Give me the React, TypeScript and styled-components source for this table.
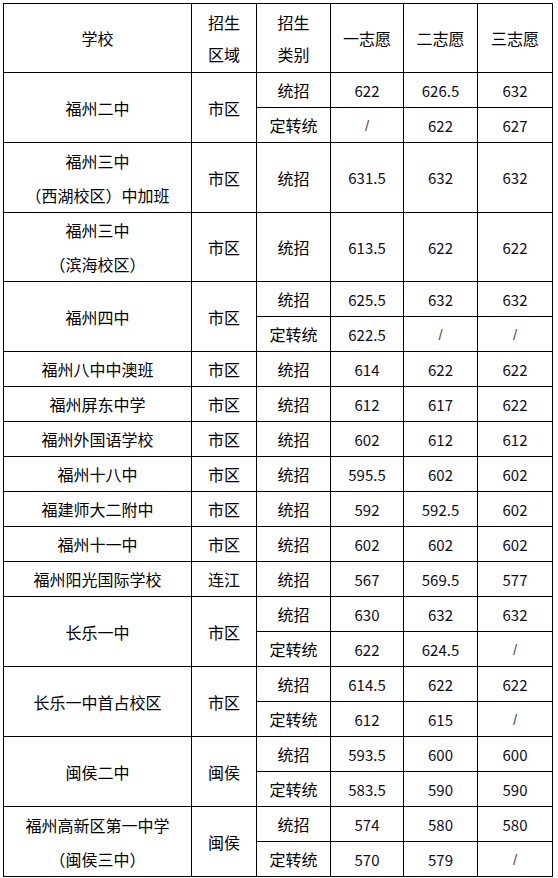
import styled, { createGlobalStyle } from 'styled-components';

type Sub = { kind: string; v: [string, string, string] };
type School = { name: string[]; area: string; subs: Sub[]; h?: number };

const UNIT = 35;

const schools: School[] = [
  {
    name: ['福州二中'],
    area: '市区',
    subs: [
      { kind: '统招', v: ['622', '626.5', '632'] },
      { kind: '定转统', v: ['/', '622', '627'] },
    ],
  },
  {
    name: ['福州三中', '（西湖校区）中加班'],
    area: '市区',
    h: 70,
    subs: [{ kind: '统招', v: ['631.5', '632', '632'] }],
  },
  {
    name: ['福州三中', '（滨海校区）'],
    area: '市区',
    h: 69,
    subs: [{ kind: '统招', v: ['613.5', '622', '622'] }],
  },
  {
    name: ['福州四中'],
    area: '市区',
    subs: [
      { kind: '统招', v: ['625.5', '632', '632'] },
      { kind: '定转统', v: ['622.5', '/', '/'] },
    ],
  },
  { name: ['福州八中中澳班'], area: '市区', subs: [{ kind: '统招', v: ['614', '622', '622'] }] },
  { name: ['福州屏东中学'], area: '市区', subs: [{ kind: '统招', v: ['612', '617', '622'] }] },
  { name: ['福州外国语学校'], area: '市区', subs: [{ kind: '统招', v: ['602', '612', '612'] }] },
  { name: ['福州十八中'], area: '市区', subs: [{ kind: '统招', v: ['595.5', '602', '602'] }] },
  { name: ['福建师大二附中'], area: '市区', subs: [{ kind: '统招', v: ['592', '592.5', '602'] }] },
  { name: ['福州十一中'], area: '市区', subs: [{ kind: '统招', v: ['602', '602', '602'] }] },
  { name: ['福州阳光国际学校'], area: '连江', subs: [{ kind: '统招', v: ['567', '569.5', '577'] }] },
  {
    name: ['长乐一中'],
    area: '市区',
    subs: [
      { kind: '统招', v: ['630', '632', '632'] },
      { kind: '定转统', v: ['622', '624.5', '/'] },
    ],
  },
  {
    name: ['长乐一中首占校区'],
    area: '市区',
    subs: [
      { kind: '统招', v: ['614.5', '622', '622'] },
      { kind: '定转统', v: ['612', '615', '/'] },
    ],
  },
  {
    name: ['闽侯二中'],
    area: '闽侯',
    subs: [
      { kind: '统招', v: ['593.5', '600', '600'] },
      { kind: '定转统', v: ['583.5', '590', '590'] },
    ],
  },
  {
    name: ['福州高新区第一中学', '（闽侯三中）'],
    area: '闽侯',
    subs: [
      { kind: '统招', v: ['574', '580', '580'] },
      { kind: '定转统', v: ['570', '579', '/'] },
    ],
  },
];

const GlobalStyle = createGlobalStyle`
  html, body {
    margin: 0;
    padding: 0;
    background: #fff;
  }
  body {
    font-family: 'Noto Sans CJK SC', 'Noto Sans', sans-serif;
    color: #000;
  }
`;

const Page = styled.div`
  padding: 3px;
`;

const Table = styled.table`
  border-collapse: collapse;
  table-layout: fixed;
  width: 549px;
`;

const Row = styled.tr<{ $h: number }>`
  height: ${(p) => p.$h}px;
`;

const Cell = styled.td<{ $lh?: number }>`
  border: 1px solid #000;
  padding: 0;
  text-align: center;
  vertical-align: middle;
  font-size: 16px;
  font-weight: 400;
  line-height: ${(p) => p.$lh ?? 20}px;
  white-space: nowrap;
  overflow: hidden;
`;

const Num = styled.span`
  font-family: 'Noto Sans CJK SC', sans-serif;
  font-size: 15px;
  color: #0d0d1a;
  font-variant-numeric: tabular-nums;
`;

const Slash = styled.span`
  font-family: 'Liberation Sans', sans-serif;
  font-size: 15px;
  color: #555;
`;

const Lines = ({ text }: { text: string[] }) => (
  <>
    {text.map((t, i) => (
      <div key={i}>{t}</div>
    ))}
  </>
);

const Value = ({ v }: { v: string }) => (v === '/' ? <Slash>/</Slash> : <Num>{v}</Num>);

export default function App() {
  return (
    <Page>
      <GlobalStyle />
      <Table>
        <colgroup>
          <col style={{ width: 188 }} />
          <col style={{ width: 65 }} />
          <col style={{ width: 74 }} />
          <col style={{ width: 73 }} />
          <col style={{ width: 74 }} />
          <col style={{ width: 75 }} />
        </colgroup>
        <tbody>
          <Row $h={69}>
            <Cell>学校</Cell>
            <Cell $lh={32}>
              <Lines text={['招生', '区域']} />
            </Cell>
            <Cell $lh={32}>
              <Lines text={['招生', '类别']} />
            </Cell>
            <Cell>一志愿</Cell>
            <Cell>二志愿</Cell>
            <Cell>三志愿</Cell>
          </Row>
          {schools.map((s) =>
            s.subs.map((sub, i) => (
              <Row key={s.name.join('') + s.area + i} $h={s.h ?? UNIT}>
                {i === 0 && (
                  <>
                    <Cell rowSpan={s.subs.length} $lh={s.name.length > 1 ? 34 : 20}>
                      <Lines text={s.name} />
                    </Cell>
                    <Cell rowSpan={s.subs.length}>{s.area}</Cell>
                  </>
                )}
                <Cell>{sub.kind}</Cell>
                {sub.v.map((v, j) => (
                  <Cell key={j}>
                    <Value v={v} />
                  </Cell>
                ))}
              </Row>
            ))
          )}
        </tbody>
      </Table>
    </Page>
  );
}
